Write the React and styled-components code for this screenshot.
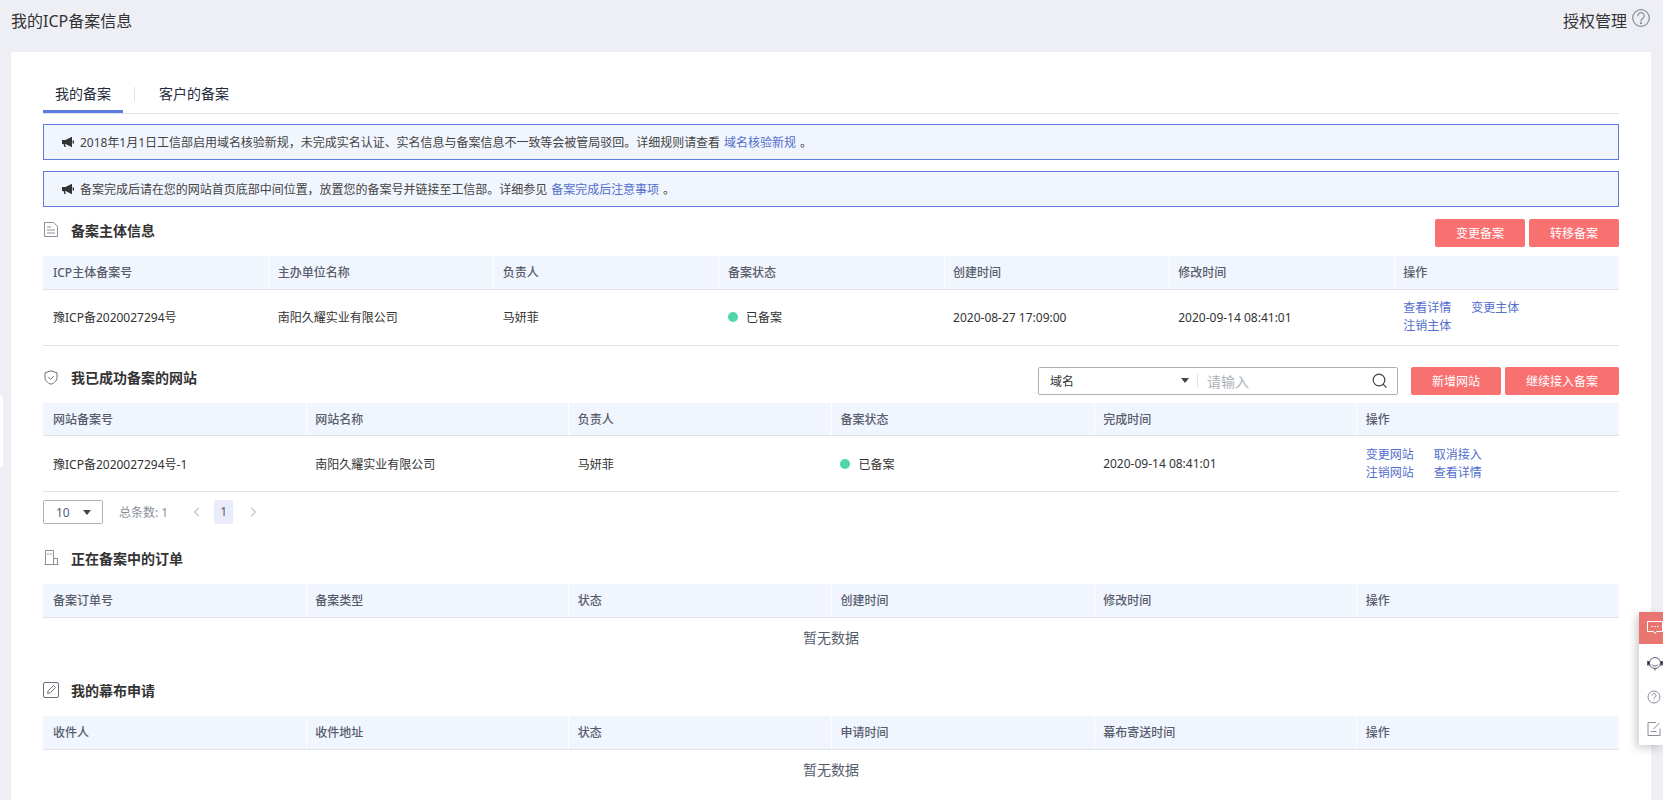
import React from "react";
import styled, { createGlobalStyle } from "styled-components";

const GlobalStyle = createGlobalStyle`
  html, body {
    margin: 0;
    padding: 0;
    height: 800px;
    overflow: hidden;
    background: #eeeff5;
    font-family: "Noto Sans", "Noto Sans CJK SC", sans-serif;
    font-size: 12px;
    color: #333;
  }
  * {
    box-sizing: border-box;
  }
`;

const Page = styled.div`
  position: relative;
  width: 1663px;
  height: 800px;
  overflow: hidden;
`;

const TopBar = styled.div`
  display: flex;
  justify-content: space-between;
  align-items: center;
  height: 52px;
  padding: 0 13px 12px 11px;
  font-size: 16px;
  color: #333;
`;

const TopRight = styled.div`
  display: flex;
  align-items: center;
  gap: 5px;
  & svg {
    margin-top: -4px;
  }
`;

const Card = styled.div`
  width: 1640px;
  min-height: 760px;
  margin-left: 11px;
  padding: 23px 32px 0;
  background: #fff;
`;

const Tabs = styled.div`
  display: flex;
  align-items: center;
  height: 39px;
  border-bottom: 1px solid #dfe1e8;
`;

const Tab = styled.div`
  width: ${(p) => p.$width}px;
  height: 38px;
  line-height: 38px;
  padding-left: ${(p) => p.$pad}px;
  font-size: 14px;
  color: #252b3a;
  border-bottom: ${(p) => (p.$active ? "3px solid #5e7ce0" : "none")};
`;

const TabDivider = styled.div`
  width: 1px;
  height: 14px;
  margin-left: 11px;
  background: #dfe1e8;
`;

const Notice = styled.div`
  display: flex;
  align-items: center;
  gap: 6px;
  height: 36px;
  margin-top: ${(p) => p.$top}px;
  padding-left: 18px;
  border: 1px solid #5e7ce0;
  background: #f1f5fd;
  color: #444;
  letter-spacing: -0.02px;
`;

const NoticeLink = styled.a`
  color: #526ecc;
  margin: 0 4px;
`;

const SectionHead = styled.div`
  display: flex;
  align-items: center;
  justify-content: space-between;
  height: 28px;
  margin-top: ${(p) => p.$top}px;
  margin-bottom: ${(p) => p.$bottom}px;
`;

const SectionTitle = styled.div`
  display: flex;
  align-items: center;
  gap: 12px;
  margin-top: -7px;
  font-size: 14px;
  font-weight: 700;
  color: #333;
`;

const IconSlot = styled.span`
  display: flex;
  width: 16px;
  justify-content: center;
`;

const Actions = styled.div`
  display: flex;
  align-items: center;
  gap: 4px;
`;

const RedButton = styled.button`
  width: ${(p) => p.$width}px;
  height: 28px;
  padding: 0;
  border: 0;
  border-radius: 2px;
  background: #f97070;
  color: #fff;
  font: inherit;
`;

const SearchBox = styled.div`
  display: flex;
  align-items: center;
  width: 360px;
  height: 28px;
  margin-right: 9px;
  border: 1px solid #adb0b8;
  border-radius: 2px;
`;

const SearchSelect = styled.div`
  display: flex;
  align-items: center;
  justify-content: space-between;
  width: 159px;
  height: 14px;
  padding: 0 8px 0 11px;
  border-right: 1px solid #dfe1e8;
  color: #333;
`;

const Caret = styled.span`
  width: 0;
  height: 0;
  border-left: 4px solid transparent;
  border-right: 4px solid transparent;
  border-top: 5px solid #444;
`;

const SearchPlaceholder = styled.div`
  flex: 1;
  padding-left: 9px;
  font-size: 14px;
  color: #adb0b8;
`;

const SearchIcon = styled.span`
  display: flex;
  margin-right: 9px;
`;

const Table = styled.table`
  width: 100%;
  border-collapse: collapse;
  table-layout: fixed;
`;

const Th = styled.th`
  height: 33px;
  padding: 0 10px 0 9.5px;
  background: #f1f5fd;
  border-bottom: 1px solid #dfe1e8;
  box-shadow: inset 1px 0 0 #fff;
  text-align: left;
  font-weight: 500;
  color: #575d6c;
  &:first-child {
    padding-left: 10px;
    box-shadow: none;
  }
`;

const Td = styled.td`
  height: 56px;
  padding: 0 10px 0 9.5px;
  border-bottom: 1px solid #dfe1e8;
  color: #333;
  vertical-align: middle;
  &:first-child {
    padding-left: 10px;
  }
`;

const EmptyCell = styled.td`
  height: 40px;
  text-align: center;
  font-size: 14px;
  color: #575d6c;
`;

const Status = styled.span`
  display: flex;
  align-items: center;
  gap: 8px;
`;

const Dot = styled.i`
  width: 10px;
  height: 10px;
  border-radius: 50%;
  background: #50d4ab;
`;

const LinkGrid = styled.div`
  display: grid;
  grid-template-columns: 48px 48px;
  column-gap: 20px;
  line-height: 18px;
`;

const OpLink = styled.a`
  color: #526ecc;
  white-space: nowrap;
`;

const Pager = styled.div`
  display: flex;
  align-items: center;
  height: 24px;
  margin-top: 8px;
  color: #8a8e99;
`;

const PageSize = styled.div`
  display: flex;
  align-items: center;
  justify-content: space-between;
  width: 60px;
  height: 24px;
  margin-right: 16px;
  padding: 0 11px 0 12px;
  border: 1px solid #adb0b8;
  border-radius: 2px;
  color: #575d6c;
`;

const PageArrow = styled.span`
  display: flex;
  width: 24px;
  margin-left: ${(p) => p.$left}px;
  margin-right: ${(p) => p.$right}px;
  justify-content: center;
`;

const PageNum = styled.span`
  width: 19px;
  height: 24px;
  line-height: 24px;
  text-align: center;
  border-radius: 2px;
  background: #e9edfa;
  color: #575d6c;
`;

const SidePanel = styled.div`
  position: absolute;
  top: 612px;
  right: 0;
  width: 24px;
  height: 133px;
  background: #fff;
  box-shadow: -3px 3px 8px rgba(0, 0, 0, 0.2);
`;

const SideItem = styled.div`
  display: flex;
  align-items: center;
  padding-left: 8px;
  height: ${(p) => p.$height}px;
  background: ${(p) => (p.$active ? "#e8756f" : "transparent")};
`;

const LeftTab = styled.div`
  position: absolute;
  top: 395px;
  left: 0;
  width: 3px;
  height: 72px;
  background: #fff;
  border-radius: 0 4px 4px 0;
`;

const HelpIcon = () => (
  <svg width="18" height="18" viewBox="0 0 18 18" fill="none" stroke="#8a8e99" strokeWidth="1.2">
    <circle cx="9" cy="9" r="8.3" />
    <path d="M5.800 6.800a3.200 3.200 0 1 1 4.800 2.800C9.500 10.300 9 10.900 9 12" strokeLinecap="round" />
    <circle cx="9" cy="14.200" r="0.500" fill="#8a8e99" />
  </svg>
);

const Horn = () => (
  <svg width="12" height="12" viewBox="0 0 12 12" fill="#333">
    <path d="M0 4h3.500L10 .8v10.400L3.500 8H3l.8 3H2.400L1.500 8H0z" />
    <path d="M10.600 4.500h1.400v3h-1.400z" />
  </svg>
);

const DocIcon = () => (
  <svg width="14" height="15" viewBox="0 0 14 15" fill="none" stroke="#8a8e99">
    <path d="M.5.500h9l4 4v10H.5z" />
    <path d="M3 5h4M3 8h8M3 11h8" />
  </svg>
);

const ShieldIcon = () => (
  <svg width="14" height="15" viewBox="0 0 14 15" fill="none" stroke="#6b6f7a">
    <path d="M7 .8l6 2v5c0 3-2.500 5.200-6 6.400C3.500 13 1 10.800 1 7.800v-5z" />
    <path d="M4.300 7l2.300 2.300L9.800 6" />
  </svg>
);

const BuildingIcon = () => (
  <svg width="15" height="15" viewBox="0 0 15 15" fill="none" stroke="#8a8e99">
    <path d="M.5 14.500h14M1.500 14.500V.5h8v14M9.500 8.500h4v6" />
    <path d="M4 3v2M7 3v2" />
  </svg>
);

const EditIcon = () => (
  <svg width="16" height="16" viewBox="0 0 16 16" fill="none" stroke="#6b6f7a">
    <rect x=".5" y=".5" width="15" height="15" rx="1.500" />
    <path d="M4.500 11.500l.7-2.700 5.300-5.300 2 2-5.300 5.300z" />
  </svg>
);

const ChevronLeft = () => (
  <svg width="7" height="10" viewBox="0 0 7 10" fill="none" stroke="#c4c6cc" strokeWidth="1.300">
    <path d="M6 .8L1.500 5 6 9.200" />
  </svg>
);

const ChevronRight = () => (
  <svg width="7" height="10" viewBox="0 0 7 10" fill="none" stroke="#c4c6cc" strokeWidth="1.300">
    <path d="M1 .8L5.500 5 1 9.200" />
  </svg>
);

const MagnifierIcon = () => (
  <svg width="16" height="16" viewBox="0 0 16 16" fill="none" stroke="#444" strokeWidth="1.200">
    <circle cx="7" cy="7" r="5.800" />
    <path d="M11 11.200l3.500 3.500" />
  </svg>
);

const ChatIcon = () => (
  <svg width="16" height="14" viewBox="0 0 16 14" fill="none" stroke="#fff">
    <path d="M.5.500h15v10H9.500L8 12.500 6.500 10.500h-6z" />
    <path d="M4.500 5.500h1.500M7.300 5.500h1.500M10 5.500h1.500" />
  </svg>
);

const AgentIcon = () => (
  <svg width="16" height="16" viewBox="0 0 16 16" fill="none" stroke="#575d6c">
    <circle cx="8" cy="7" r="5.500" />
    <path d="M5 8.500c1.500 2 4.500 2 6 0" />
    <rect x="0.500" y="5.500" width="2" height="3.500" fill="#252b3a" />
    <rect x="13.500" y="5.500" width="2" height="3.500" fill="#252b3a" />
    <path d="M8 12.500v2" />
  </svg>
);

const SideHelpIcon = () => (
  <svg width="14" height="14" viewBox="0 0 14 14" fill="none" stroke="#8a8e99">
    <circle cx="7" cy="7" r="6" />
    <path d="M5.200 5.500a1.900 1.900 0 1 1 2.800 1.600C7.300 7.500 7 7.900 7 8.600M7 10v.8" />
  </svg>
);

const NoteIcon = () => (
  <svg width="14" height="15" viewBox="0 0 14 15" fill="none" stroke="#8a8e99">
    <path d="M13 7.500v7H1v-13h8" />
    <path d="M6.500 8l6-6M3.500 10.500h6" />
  </svg>
);

const SimpleTable = ({ headers, children }) => (
  <Table>
    <thead>
      <tr>
        {headers.map((h) => (
          <Th key={h}>{h}</Th>
        ))}
      </tr>
    </thead>
    <tbody>{children}</tbody>
  </Table>
);

const StatusDone = () => (
  <Status>
    <Dot />
    已备案
  </Status>
);

export default function App() {
  return (
    <Page>
      <GlobalStyle />
      <TopBar>
        <div>我的ICP备案信息</div>
        <TopRight>
          授权管理
          <HelpIcon />
        </TopRight>
      </TopBar>
      <Card>
        <Tabs>
          <Tab $active $width={80} $pad={12}>我的备案</Tab>
          <TabDivider />
          <Tab $width={100} $pad={24}>客户的备案</Tab>
        </Tabs>
        <Notice $top={10}>
          <Horn />
          <span>
            2018年1月1日工信部启用域名核验新规，未完成实名认证、实名信息与备案信息不一致等会被管局驳回。详细规则请查看
            <NoticeLink>域名核验新规</NoticeLink>。
          </span>
        </Notice>
        <Notice $top={11}>
          <Horn />
          <span>
            备案完成后请在您的网站首页底部中间位置，放置您的备案号并链接至工信部。详细参见
            <NoticeLink>备案完成后注意事项</NoticeLink>。
          </span>
        </Notice>

        <SectionHead $top={12} $bottom={9}>
          <SectionTitle>
            <IconSlot><DocIcon /></IconSlot>
            备案主体信息
          </SectionTitle>
          <Actions>
            <RedButton $width={90}>变更备案</RedButton>
            <RedButton $width={90}>转移备案</RedButton>
          </Actions>
        </SectionHead>
        <SimpleTable headers={["ICP主体备案号", "主办单位名称", "负责人", "备案状态", "创建时间", "修改时间", "操作"]}>
          <tr>
            <Td>豫ICP备2020027294号</Td>
            <Td>南阳久耀实业有限公司</Td>
            <Td>马妍菲</Td>
            <Td><StatusDone /></Td>
            <Td>2020-08-27 17:09:00</Td>
            <Td>2020-09-14 08:41:01</Td>
            <Td>
              <LinkGrid>
                <OpLink>查看详情</OpLink>
                <OpLink>变更主体</OpLink>
                <OpLink>注销主体</OpLink>
              </LinkGrid>
            </Td>
          </tr>
        </SimpleTable>

        <SectionHead $top={21} $bottom={8}>
          <SectionTitle>
            <IconSlot><ShieldIcon /></IconSlot>
            我已成功备案的网站
          </SectionTitle>
          <Actions>
            <SearchBox>
              <SearchSelect>
                域名
                <Caret />
              </SearchSelect>
              <SearchPlaceholder>请输入</SearchPlaceholder>
              <SearchIcon><MagnifierIcon /></SearchIcon>
            </SearchBox>
            <RedButton $width={90}>新增网站</RedButton>
            <RedButton $width={114}>继续接入备案</RedButton>
          </Actions>
        </SectionHead>
        <SimpleTable headers={["网站备案号", "网站名称", "负责人", "备案状态", "完成时间", "操作"]}>
          <tr>
            <Td>豫ICP备2020027294号-1</Td>
            <Td>南阳久耀实业有限公司</Td>
            <Td>马妍菲</Td>
            <Td><StatusDone /></Td>
            <Td>2020-09-14 08:41:01</Td>
            <Td>
              <LinkGrid>
                <OpLink>变更网站</OpLink>
                <OpLink>取消接入</OpLink>
                <OpLink>注销网站</OpLink>
                <OpLink>查看详情</OpLink>
              </LinkGrid>
            </Td>
          </tr>
        </SimpleTable>
        <Pager>
          <PageSize>
            10
            <Caret />
          </PageSize>
          总条数: 1
          <PageArrow $left={16} $right={6}><ChevronLeft /></PageArrow>
          <PageNum>1</PageNum>
          <PageArrow $left={8} $right={0}><ChevronRight /></PageArrow>
        </Pager>

        <SectionHead $top={23} $bottom={9}>
          <SectionTitle>
            <IconSlot><BuildingIcon /></IconSlot>
            正在备案中的订单
          </SectionTitle>
        </SectionHead>
        <SimpleTable headers={["备案订单号", "备案类型", "状态", "创建时间", "修改时间", "操作"]}>
          <tr>
            <EmptyCell colSpan={6}>暂无数据</EmptyCell>
          </tr>
        </SimpleTable>

        <SectionHead $top={22} $bottom={9}>
          <SectionTitle>
            <IconSlot><EditIcon /></IconSlot>
            我的幕布申请
          </SectionTitle>
        </SectionHead>
        <SimpleTable headers={["收件人", "收件地址", "状态", "申请时间", "幕布寄送时间", "操作"]}>
          <tr>
            <EmptyCell colSpan={6}>暂无数据</EmptyCell>
          </tr>
        </SimpleTable>
      </Card>
      <LeftTab />
      <SidePanel>
        <SideItem $active $height={32}><ChatIcon /></SideItem>
        <SideItem $height={40}><AgentIcon /></SideItem>
        <SideItem $height={26}><SideHelpIcon /></SideItem>
        <SideItem $height={37}><NoteIcon /></SideItem>
      </SidePanel>
    </Page>
  );
}
